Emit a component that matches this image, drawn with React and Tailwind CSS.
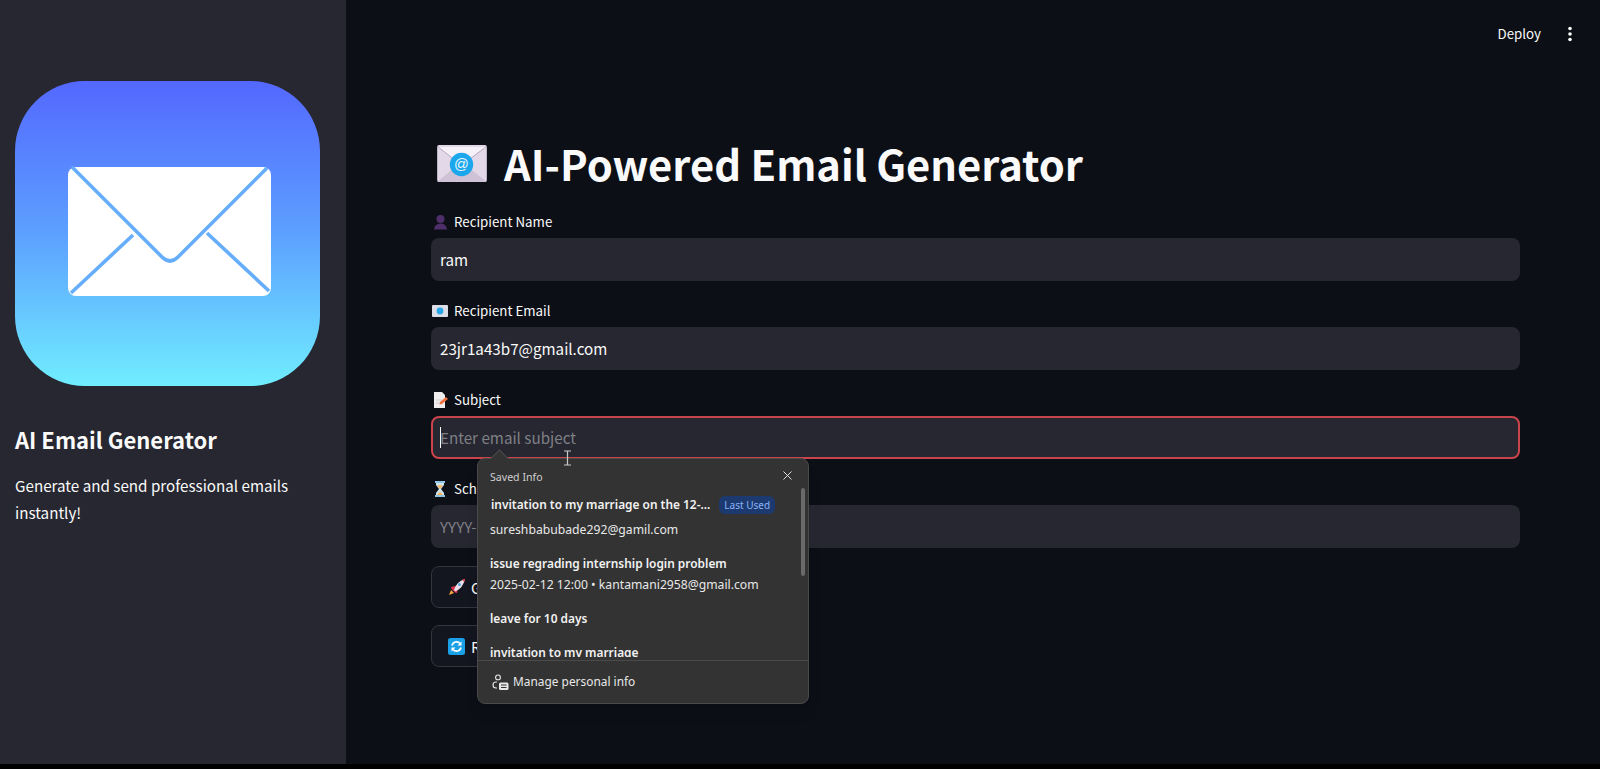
import { X } from "lucide-react";

function AppLogo() {
    return (
        <svg width="305" height="305" viewBox="0 0 305 305" className="block">
            <defs>
                <linearGradient id="logoFill" x1="0" y1="0" x2="0" y2="1">
                    <stop offset="0" stopColor="#5468ff" />
                    <stop offset="0.5" stopColor="#5ca0ff" />
                    <stop offset="1" stopColor="#70edff" />
                </linearGradient>
            </defs>
            <rect width="305" height="305" rx="70" fill="url(#logoFill)" />
            <rect x="53" y="86" width="203" height="129" rx="8" fill="#fff" />
            <g fill="none" stroke="#66aefb" strokeWidth="3.6">
                <path d="M57 86 L147 176 Q155 184 163 176 L252 87" />
                <path d="M118 154 L56 212" />
                <path d="M192 152 L254 210" />
            </g>
        </svg>
    );
}

function TitleEnvelope() {
    return (
        <svg width="50" height="37" viewBox="0 0 51 38" className="block shrink-0">
            <rect width="51" height="38" rx="2" fill="#e3d8e8" />
            <path d="M0 38 L25 17 L51 38 Z" fill="#cfc2d6" />
            <path d="M1 2 L25 21 L50 2" fill="#f6f0f8" stroke="#b3a6bd" strokeWidth="1" />
            <circle cx="25" cy="20" r="12" fill="#1ca7ec" />
            <text x="25" y="25" textAnchor="middle" fontSize="15" fill="#e8f6fe" fontFamily="Liberation Sans, sans-serif">@</text>
        </svg>
    );
}

function PersonEmoji() {
    return (
        <svg width="15" height="16" viewBox="0 0 15 16" className="block">
            <circle cx="7.5" cy="5" r="4" fill="#4f2f6b" />
            <path d="M1 15.5 Q1.5 10 7.5 9.5 Q13.5 10 14 15.5 Z" fill="#4f2f6b" />
        </svg>
    );
}

function MailEmoji() {
    return (
        <svg width="16" height="12" viewBox="0 0 16 12" className="block">
            <rect width="16" height="12" rx="1" fill="#dcdde6" />
            <circle cx="8" cy="6" r="3.4" fill="#2aa5e8" />
        </svg>
    );
}

function MemoEmoji() {
    return (
        <svg width="15" height="16" viewBox="0 0 15 16" className="block">
            <path d="M1 0 H9 L12 3 V16 H1 Z" fill="#f1eef0" />
            <path d="M3 8 H9 M3 11 H7" stroke="#d3c9cf" strokeWidth="1" />
            <path d="M7 10 L13 5 L15 7 L9 12 L6.5 12.5 Z" fill="#f2703f" />
        </svg>
    );
}

function HourglassEmoji() {
    return (
        <svg width="12" height="16" viewBox="0 0 12 16" className="block">
            <path d="M2 1.5 H10 V4 L7 8 L10 12 V14.5 H2 V12 L5 8 L2 4 Z" fill="#cfe6f2" />
            <path d="M3 4 H9 L6 8 Z M2.8 14 L6 10.5 L9.2 14 Z" fill="#f4b860" />
            <rect x="1" width="10" height="2" fill="#8fc1e0" />
            <rect x="1" y="14" width="10" height="2" fill="#8fc1e0" />
        </svg>
    );
}

function RocketEmoji() {
    return (
        <svg width="18" height="18" viewBox="0 0 18 18" className="block">
            <path d="M1 17 L3 12 L6 15 Z" fill="#f2a33c" />
            <path d="M3 9 L7 8 L10 11 L9 15 L7 14.5 L3.5 11 Z" fill="#d8324f" />
            <path d="M6 12 Q8 4 17 1 Q15 10 7.5 13.5 Z" fill="#ecdfe6" />
            <path d="M14 1.6 L17 1 L16.4 4 Z" fill="#d8324f" />
            <circle cx="11.5" cy="6.6" r="1.5" fill="#4aa6e0" />
        </svg>
    );
}

function RefreshEmoji() {
    return (
        <svg width="17" height="17" viewBox="0 0 17 17" className="block">
            <rect width="17" height="17" rx="2.5" fill="#19a0e6" />
            <path d="M4 7.5 A4.6 4.6 0 0 1 12 5.5" fill="none" stroke="#fff" strokeWidth="1.7" />
            <path d="M13 9.5 A4.6 4.6 0 0 1 5 11.5" fill="none" stroke="#fff" strokeWidth="1.7" />
            <path d="M13.5 3.5 V7.5 H9.5 Z M3.5 13.5 V9.5 H7.5 Z" fill="#fff" />
        </svg>
    );
}

function ManageIcon() {
    return (
        <svg width="17" height="17" viewBox="0 0 17 17" className="block" fill="none" stroke="#e8e8e8" strokeWidth="1.1">
            <circle cx="6" cy="3.4" r="2.4" />
            <path d="M5 8 H4 Q1 8 1 11 Q1 14 4 14 H5" />
            <rect x="7" y="8.5" width="9.5" height="7.5" rx="1.5" fill="#e8e8e8" stroke="none" />
            <path d="M9 11 H14.5 M9 13.5 H14.5" stroke="#333" strokeWidth="1" />
        </svg>
    );
}

function TextCursor() {
    return (
        <svg width="9" height="16" viewBox="0 0 9 16" className="absolute z-30 left-[132px] top-[61px]" fill="none" stroke="#c9c9c9" strokeWidth="1.2">
            <path d="M1 1 H8 M4.5 1 V15 M1 15 H8" />
        </svg>
    );
}

function Field({ icon, label, value, placeholder, focused }) {
    return (
        <div className="flex flex-col">
            <div className="flex items-center h-[22px] text-[13.3px] text-[#fafafa]">
                <span className="w-[22px] flex justify-center -ml-[2px] mr-[2px]">{icon}</span>
                <span className="ml-[1px]">{label}</span>
            </div>
            <div className={
                focused
                    ? "mt-[5px] h-[43px] rounded-lg bg-[#262730] border-2 border-[#c9454b] flex items-center px-[7px] text-[15.2px]"
                    : "mt-[5px] h-[43px] rounded-lg bg-[#262730] flex items-center px-[9px] text-[15.2px]"
            }>
                {focused && <span className="w-px h-[21px] bg-[#fafafa] -mr-px" />}
                {value ? (
                    <span className="text-[#fafafa]">{value}</span>
                ) : (
                    <span className="text-[#7f8086]">{placeholder}</span>
                )}
            </div>
        </div>
    );
}

function ActionButton({ icon, label, gap }) {
    return (
        <div className="h-[42px] w-[170px] rounded-lg bg-[#13161e] border border-[#33353f] flex items-center pl-[16px] text-[15.2px] text-[#fafafa] whitespace-nowrap">
            {icon}
            <span className={gap}>{label}</span>
        </div>
    );
}

function SavedInfoPopup() {
    return (
        <div className="absolute z-20 left-[46px] top-[69px] w-[332px] h-[246px] rounded-lg bg-[#333333] border border-[#4a4a4a] flex flex-col text-[#e8e8e8] font-['Noto_Sans',sans-serif] shadow-lg">
            <div className="absolute -top-[7px] left-[15px] w-[13px] h-[13px] rotate-45 bg-[#333333] border-l border-t border-[#4a4a4a]" />
            <div className="absolute top-[29px] right-[3px] z-10 w-[4px] h-[88px] rounded-full bg-[#6a6a6a]" />
            <div className="relative flex items-center justify-between h-[33px] pt-[5px] pl-[12px] pr-[13px] text-[10.6px] text-[#d0d0d0]">
                <span>Saved Info</span>
                <X size={15} strokeWidth={1.5} color="#ececec" className="-mt-[5px]" />
            </div>
            <div className="flex-1 min-h-0 mb-[3px] overflow-hidden pl-[12px] text-[12.2px]">
                <div className="flex items-center h-[20px] mt-[3px]">
                    <span className="text-[11.9px] font-semibold pl-[1px] text-[#f2f2f2] whitespace-nowrap">invitation to my marriage on the 12-...</span>
                    <span className="ml-[9px] h-[18px] px-[5px] flex items-center rounded-md bg-[#1c3a70] text-[10px] text-[#8ab4f8] whitespace-nowrap">Last Used</span>
                </div>
                <div className="mt-[5px] h-[20px] leading-[20px]">sureshbabubade292@gamil.com</div>
                <div className="mt-[13px] h-[20px] leading-[20px] text-[11.9px] font-semibold text-[#f2f2f2]">issue regrading internship login problem</div>
                <div className="mt-[2px] h-[20px] leading-[20px]">2025-02-12 12:00 • kantamani2958@gmail.com</div>
                <div className="mt-[13px] h-[20px] leading-[20px] text-[11.9px] font-semibold text-[#f2f2f2]">leave for 10 days</div>
                <div className="mt-[14px] h-[20px] leading-[20px] text-[11.9px] font-semibold text-[#f2f2f2]">invitation to my marriage</div>
            </div>
            <div className="h-[43px] shrink-0 border-t border-[#4a4a4a] flex items-center pl-[14px] gap-[4px] text-[11.9px]">
                <ManageIcon />
                <span>Manage personal info</span>
            </div>
        </div>
    );
}

export default function App() {
    return (
        <div className="h-[769px] w-[1600px] bg-black overflow-hidden font-['Noto_Sans_CJK_SC','Noto_Sans',sans-serif]">
            <div className="flex h-[764px]">
                <aside className="w-[346px] shrink-0 bg-[#262730] pt-[81px] pl-[15px]">
                    <AppLogo />
                    <h2 className="mt-[38px] text-[22px] leading-[30px] font-semibold text-[#fafafa]">AI Email Generator</h2>
                    <p className="mt-[18px] w-[300px] text-[15.2px] leading-[27px] text-[#fafafa]">
                        Generate and send professional emails instantly!
                    </p>
                </aside>
                <main className="flex-1 bg-[#0c0f15] flex flex-col">
                    <div className="h-[68px] flex items-center justify-end pr-[24px] text-[13.3px] text-[#fafafa]">
                        <span className="mr-[23px]">Deploy</span>
                        <svg width="12" height="16" viewBox="0 0 12 16" fill="#fafafa" className="block">
                            <circle cx="6" cy="2.5" r="1.8" />
                            <circle cx="6" cy="8" r="1.8" />
                            <circle cx="6" cy="13.5" r="1.8" />
                        </svg>
                    </div>
                    <div className="pl-[85px] pr-[80px]">
                        <div className="flex items-center h-[70px] mt-[60px] pl-[6px] gap-[17px]">
                            <TitleEnvelope />
                            <h1 className="text-[41.7px] leading-[60px] font-bold text-[#fafafa] whitespace-nowrap">AI-Powered Email Generator</h1>
                        </div>
                        <div className="mt-[13px] flex flex-col gap-[19px]">
                            <Field icon={<PersonEmoji />} label="Recipient Name" value="ram" />
                            <Field icon={<MailEmoji />} label="Recipient Email" value="23jr1a43b7@gmail.com" />
                            <div className="relative">
                                <Field icon={<MemoEmoji />} label="Subject" placeholder="Enter email subject" focused />
                                <SavedInfoPopup />
                                <TextCursor />
                            </div>
                            <Field icon={<HourglassEmoji />} label="Schedule Time" placeholder="YYYY-MM-DD HH:MM" />
                        </div>
                        <div className="mt-[18px] flex flex-col gap-[17px]">
                            <ActionButton icon={<RocketEmoji />} label="Generate Email" gap="ml-[5px]" />
                            <ActionButton icon={<RefreshEmoji />} label="Regenerate" gap="ml-[6px]" />
                        </div>
                    </div>
                </main>
            </div>
        </div>
    );
}
